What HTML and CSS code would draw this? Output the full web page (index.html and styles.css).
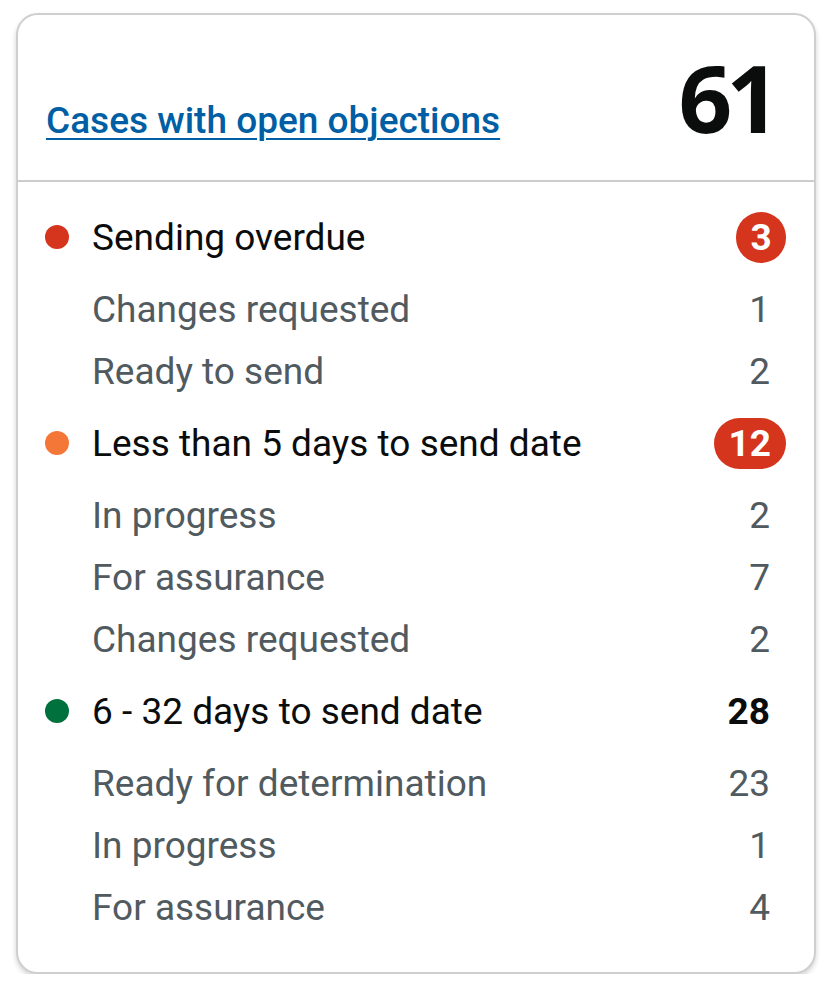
FILE: index.html
```html
<!DOCTYPE html>
<html lang="en">
<head>
<meta charset="utf-8">
<title>Cases with open objections</title>
<link rel="stylesheet" href="styles.css">
</head>
<body>
<div class="card">
  <div class="card-header">
    <a class="card-title" href="#">Cases with open objections</a>
    <span class="total">61</span>
  </div>
  <ul class="list">
    <li class="row group">
      <span class="dot dot-red"></span>
      <span class="label">Sending overdue</span>
      <span class="badge badge-round">3</span>
    </li>
    <li class="row sub"><span class="label">Changes requested</span><span class="num">1</span></li>
    <li class="row sub"><span class="label">Ready to send</span><span class="num">2</span></li>
    <li class="row group">
      <span class="dot dot-orange"></span>
      <span class="label">Less than 5 days to send date</span>
      <span class="badge">12</span>
    </li>
    <li class="row sub"><span class="label">In progress</span><span class="num">2</span></li>
    <li class="row sub"><span class="label">For assurance</span><span class="num">7</span></li>
    <li class="row sub"><span class="label">Changes requested</span><span class="num">2</span></li>
    <li class="row group">
      <span class="dot dot-green"></span>
      <span class="label">6 - 32 days to send date</span>
      <span class="num num-bold">28</span>
    </li>
    <li class="row sub"><span class="label">Ready for determination</span><span class="num">23</span></li>
    <li class="row sub"><span class="label">In progress</span><span class="num">1</span></li>
    <li class="row sub"><span class="label">For assurance</span><span class="num">4</span></li>
  </ul>
</div>
</body>
</html>
```
FILE: styles.css
```css
html, body {
  margin: 0;
  padding: 0;
  background: #ffffff;
}

body {
  font-family: Roboto, "Liberation Sans", sans-serif;
  color: #0b0c0c;
}

.card {
  margin: 13px 16px 0 16px;
  border: 2px solid #cfcfcf;
  border-radius: 22px;
  box-shadow: 0 3px 5px rgba(0, 0, 0, 0.18);
  background: #ffffff;
}

.card-header {
  display: flex;
  align-items: baseline;
  justify-content: space-between;
  height: 131px;
  padding: 34px 40px 0 28px;
  border-bottom: 2px solid #cccccc;
}

.card-title {
  font-size: 37px;
  font-weight: 500;
  color: #005ea5;
  text-decoration: underline;
  text-decoration-thickness: 2px;
  text-underline-offset: 5px;
}

.total {
  font-family: "Open Sans", "Noto Sans", sans-serif;
  font-weight: 700;
  font-size: 94px;
  line-height: 96px;
  color: #0b0c0c;
  letter-spacing: -6px;
}

.list {
  list-style: none;
  margin: 0;
  padding: 14px 28px 34px 27px;
}

.row {
  display: flex;
  align-items: center;
  font-size: 37px;
}

.row .label {
  flex: 1;
}

.group {
  height: 82px;
  color: #0b0c0c;
}

.sub {
  height: 62px;
  padding-left: 47px;
  color: #505a5f;
}

.dot {
  width: 24px;
  height: 24px;
  border-radius: 50%;
  margin-right: 23px;
  flex: none;
}

.dot-red { background: #d4351c; }
.dot-orange { background: #f47738; }
.dot-green { background: #00703c; }

.num {
  padding-right: 16px;
}

.num-bold {
  font-weight: 700;
  color: #0b0c0c;
}

.badge {
  display: inline-flex;
  align-items: center;
  justify-content: center;
  height: 51px;
  min-width: 50px;
  box-sizing: border-box;
  padding: 0 15px;
  border-radius: 26px;
  background: #d4351c;
  color: #ffffff;
  font-weight: 700;
  font-size: 37px;
}

.badge-round {
  padding: 0;
  width: 50px;
}
```
